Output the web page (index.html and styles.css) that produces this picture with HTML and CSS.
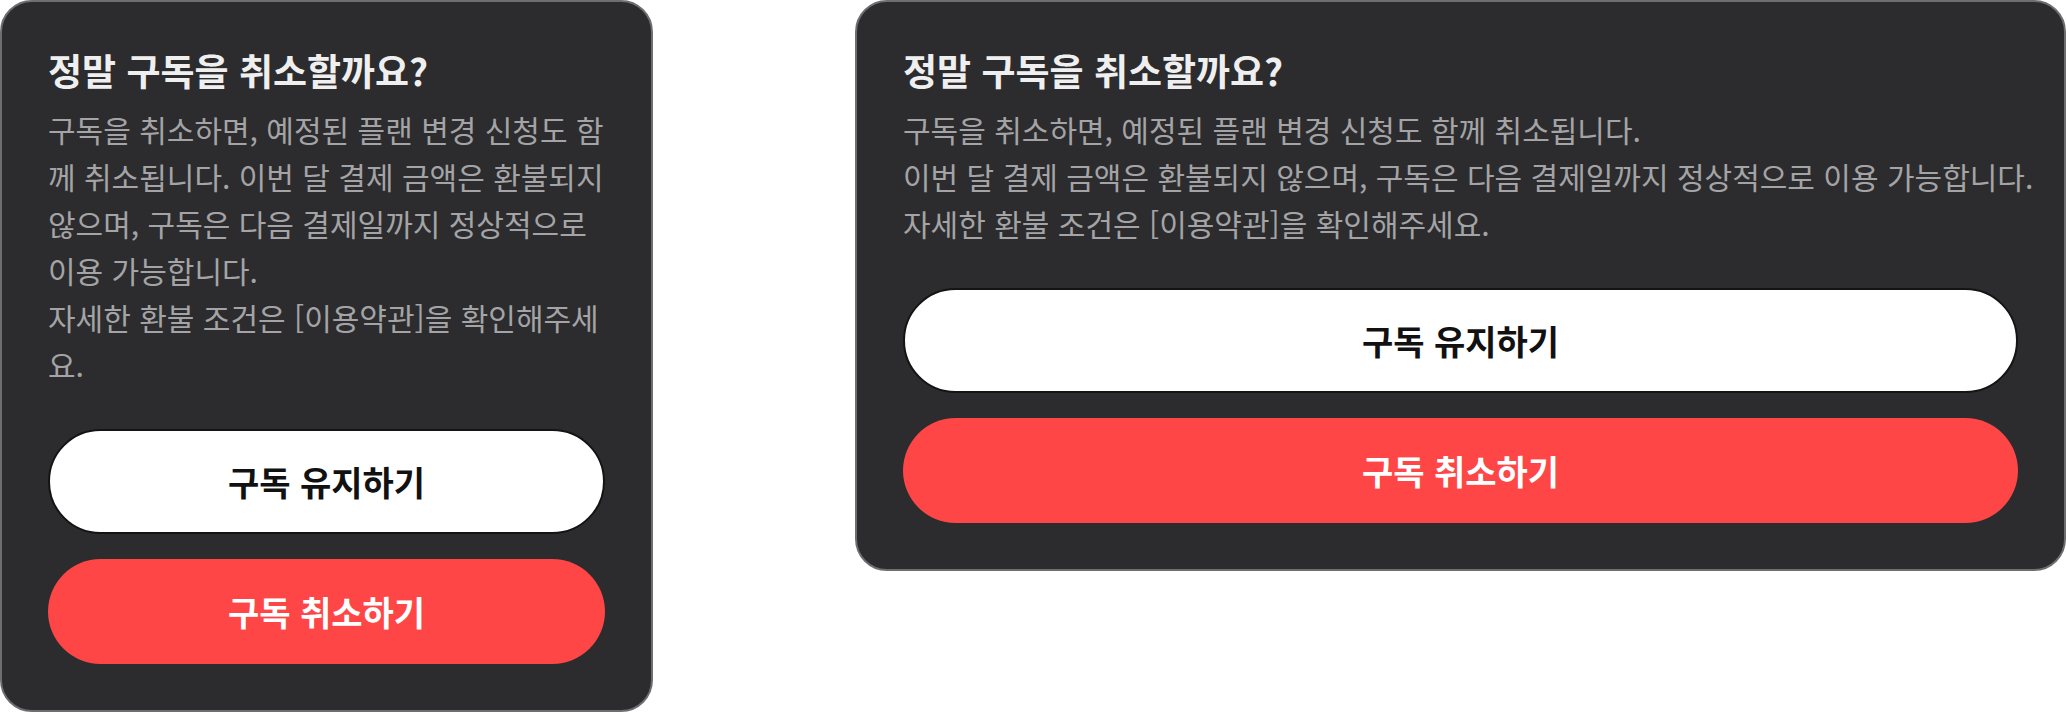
FILE: index.html
```html
<!DOCTYPE html>
<html lang="ko">
<head>
<meta charset="utf-8">
<title>구독 취소</title>
<link rel="stylesheet" href="styles.css">
</head>
<body>
  <main class="stage">
    <section class="dialog dialog--narrow" role="dialog" aria-labelledby="cancel-title-m">
      <h2 class="dialog__title" id="cancel-title-m">정말 구독을 취소할까요?</h2>
      <p class="dialog__body">구독을 취소하면, 예정된 플랜 변경 신청도 함께 취소됩니다. 이번 달 결제 금액은 환불되지 않으며, 구독은 다음 결제일까지 정상적으로 이용 가능합니다.<br>자세한 환불 조건은 [이용약관]을 확인해주세요.</p>
      <div class="dialog__actions">
        <button class="btn btn--keep" type="button">구독 유지하기</button>
        <button class="btn btn--cancel" type="button">구독 취소하기</button>
      </div>
    </section>

    <section class="dialog dialog--wide" role="dialog" aria-labelledby="cancel-title-d">
      <h2 class="dialog__title" id="cancel-title-d">정말 구독을 취소할까요?</h2>
      <p class="dialog__body dialog__body--lines">구독을 취소하면, 예정된 플랜 변경 신청도 함께 취소됩니다.<br>이번 달 결제 금액은 환불되지 않으며, 구독은 다음 결제일까지 정상적으로 이용 가능합니다.<br>자세한 환불 조건은 [이용약관]을 확인해주세요.</p>
      <div class="dialog__actions">
        <button class="btn btn--keep" type="button">구독 유지하기</button>
        <button class="btn btn--cancel" type="button">구독 취소하기</button>
      </div>
    </section>
  </main>
</body>
</html>
```

FILE: styles.css
```css
* {
  box-sizing: border-box;
}

html,
body {
  margin: 0;
  background: #ffffff;
}

body {
  font-family: "Noto Sans CJK KR", "Noto Sans", sans-serif;
}

.stage {
  display: flex;
  align-items: flex-start;
  gap: 202px;
}

/* Confirmation dialog */
.dialog {
  display: flex;
  flex-direction: column;
  background: #2c2c2e;
  border: 2px solid #6e6e70;
  border-radius: 32px;
  padding: 44px 46px 46px;
}

.dialog--narrow {
  width: 653px;
  flex: 0 0 auto;
}

.dialog--wide {
  flex: 1 1 auto;
  min-width: 0;
}

.dialog__title {
  margin: 0;
  font-size: 37px;
  line-height: 48px;
  font-weight: 700;
  color: #efeff0;
}

.dialog__body {
  margin: 12px 0 0;
  font-size: 30px;
  line-height: 47px;
  font-weight: 400;
  color: #a4a4a6;
}

/* wide layout: one sentence per line, breaks are explicit */
.dialog__body--lines {
  white-space: nowrap;
}

.dialog__actions {
  display: flex;
  flex-direction: column;
  gap: 25px;
  margin-top: 41px;
}

/* Pill buttons */
.btn {
  display: flex;
  align-items: center;
  justify-content: center;
  height: 105px;
  border-radius: 999px;
  border: 2px solid transparent;
  font-family: inherit;
  font-size: 34px;
  font-weight: 700;
  cursor: pointer;
}

.btn--keep {
  background: #ffffff;
  border-color: #141414;
  color: #111111;
}

.btn--cancel {
  background: #ff4646;
  color: #ffffff;
}
```
